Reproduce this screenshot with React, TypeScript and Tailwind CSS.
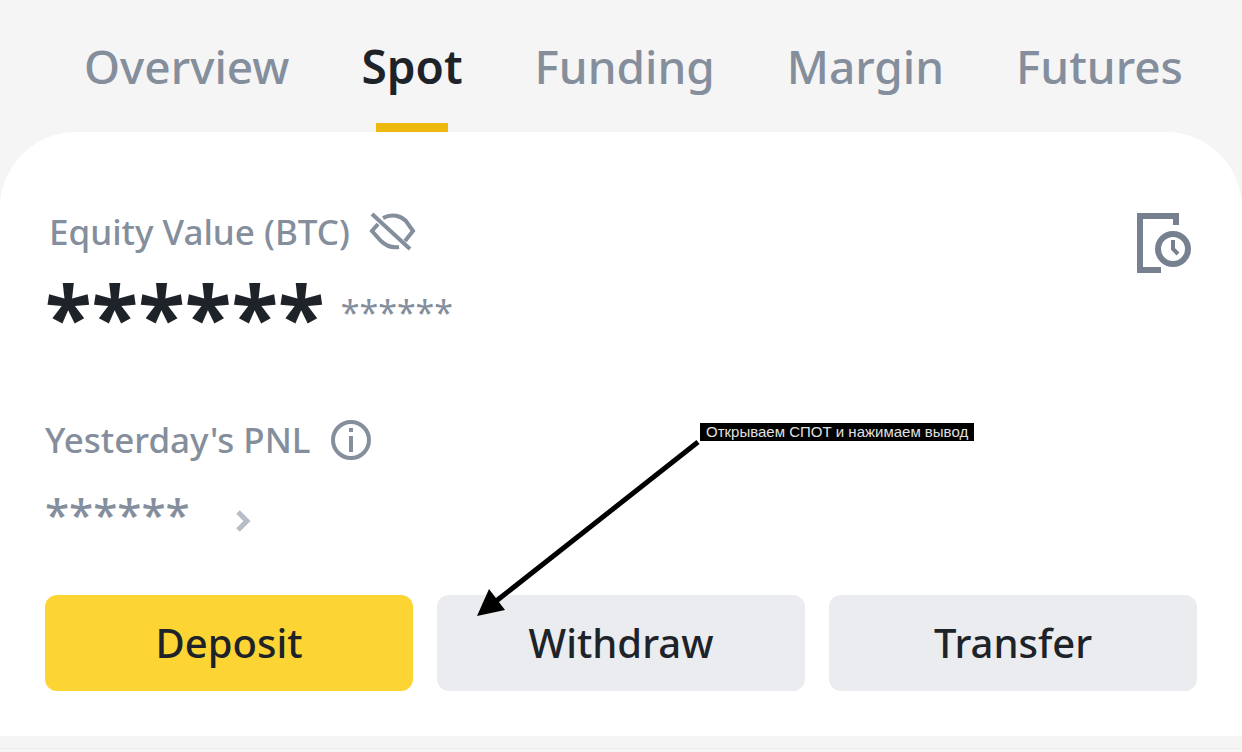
import { useState } from 'react';
import clsx from 'clsx';

const TABS = ['Overview', 'Spot', 'Funding', 'Margin', 'Futures'];

function EyeOffIcon() {
    return (
        <svg width="48" height="40" viewBox="0 0 48 40" fill="none" stroke="currentColor" strokeWidth="4">
            <path d="M4 2L42 37" />
            <path d="M15 6C24 1 33 4 38 9L45 19L37 29" />
            <path d="M10 12L4 19L13 29C18 34 24 36 31 35" />
        </svg>
    );
}

function InfoIcon() {
    return (
        <svg width="40" height="40" viewBox="0 0 40 40" fill="none" stroke="currentColor" strokeWidth="4">
            <circle cx="20" cy="20" r="18" />
            <path d="M20 8V12M20 16V32" />
        </svg>
    );
}

function HistoryIcon() {
    return (
        <svg width="54" height="61" viewBox="0 0 54 61" fill="none" stroke="currentColor" strokeWidth="6">
            <path d="M39 13V4H3V58H24" />
            <circle cx="36" cy="37" r="15" />
            <path d="M36 28V37L41 42" strokeWidth="4" />
        </svg>
    );
}

function ChevronIcon() {
    return (
        <svg width="16" height="22" viewBox="0 0 16 22" fill="none" stroke="currentColor" strokeWidth="5">
            <path d="M3 2L12 11L3 20" />
        </svg>
    );
}

// Arrow and caption pinned to the withdraw button
function WithdrawHint() {
    return (
        <div className="pointer-events-none absolute left-[40px] bottom-[75px]">
            <svg width="224" height="176" viewBox="0 0 224 176" className="block">
                <path d="M221 2L18 162" stroke="#000" strokeWidth="5" />
                <path d="M0 176L12 149L28 170Z" fill="#000" />
            </svg>
            <span className="absolute left-[223px] top-[-17px] bg-black px-1.5 text-[15px] leading-[18px] whitespace-nowrap text-[#e0e0e0] font-['Liberation_Sans',Arial,sans-serif]">
                Открываем СПОТ и нажимаем вывод
            </span>
        </div>
    );
}

export default function App() {
    const [tab, setTab] = useState('Spot');

    return (
        <div className="min-h-screen bg-[#f5f5f5] text-[#848e9c] font-['Noto_Sans',sans-serif]">
            <nav className="flex justify-between pt-[42px] pl-[84px] pr-[59px]">
                {TABS.map((name) => (
                    <button
                        key={name}
                        onClick={() => setTab(name)}
                        className={clsx(
                            'flex flex-col items-center gap-[33px] text-[46px] leading-[48px]',
                            name === tab ? 'font-semibold text-[#1e2329]' : 'font-medium'
                        )}
                    >
                        <span>{name}</span>
                        <span className={clsx('h-[9px] w-[72px]', name === tab && 'bg-[#eeb90f]')} />
                    </button>
                ))}
            </nav>

            <main className="rounded-t-[76px] bg-white px-[45px] pt-20 pb-[45px]">
                <div className="flex items-start justify-between pr-1.5">
                    <div>
                        <div className="flex items-center gap-[18px] pl-1">
                            <span className="text-[35px] leading-10 font-medium">Equity Value (BTC)</span>
                            <button aria-label="Show balance">
                                <EyeOffIcon />
                            </button>
                        </div>
                        <div className="mt-5 flex items-center gap-4">
                            <span className="text-[86px] leading-[88px] font-bold text-[#1e2329]">******</span>
                            <span className="pb-2 text-[34px] leading-10">******</span>
                        </div>
                    </div>
                    <button aria-label="History" className="text-[#76808f]">
                        <HistoryIcon />
                    </button>
                </div>

                <div className="mt-[60px] flex items-center gap-5">
                    <span className="text-[35px] leading-10 font-medium">Yesterday's PNL</span>
                    <button aria-label="About PNL">
                        <InfoIcon />
                    </button>
                </div>
                <div className="mt-8 flex items-end gap-[45px]">
                    <span className="text-[44px] leading-[44px] font-medium">******</span>
                    <button aria-label="PNL details" className="mb-1 text-[#b7bdc6]">
                        <ChevronIcon />
                    </button>
                </div>

                <div className="mt-[59px] grid grid-cols-3 gap-6 text-[40px] font-medium leading-[96px] text-[#1e2329]">
                    <button className="rounded-xl bg-[#fcd535]">Deposit</button>
                    <div className="relative">
                        <button className="w-full rounded-xl bg-[#eaecef]">Withdraw</button>
                        <WithdrawHint />
                    </div>
                    <button className="rounded-xl bg-[#eaecef]">Transfer</button>
                </div>
            </main>
            <div className="mt-3 border-t border-[#eeeeee]" />
        </div>
    );
}
